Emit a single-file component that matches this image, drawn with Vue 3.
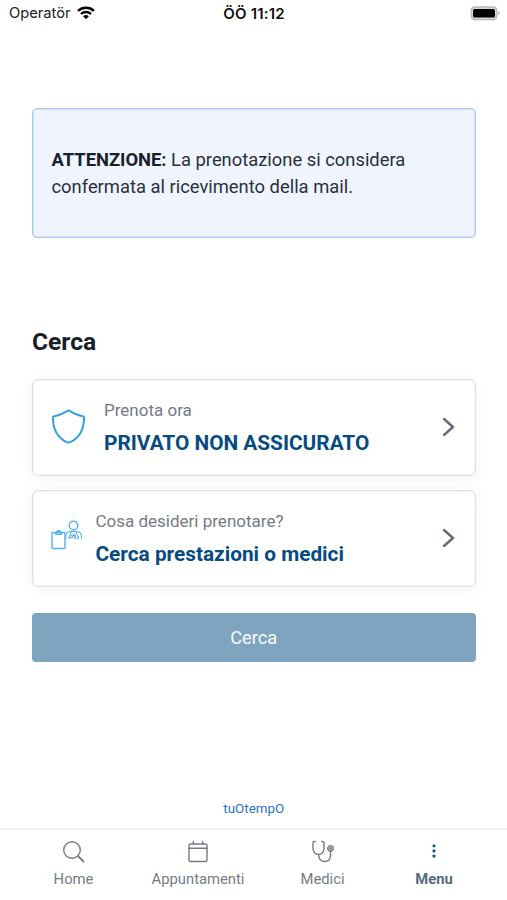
<script setup>
const cards = [
  { id: 'cover', icon: 'shield', label: 'Prenota ora', value: 'PRIVATO NON ASSICURATO' },
  { id: 'service', icon: 'doctor', label: 'Cosa desideri prenotare?', value: 'Cerca prestazioni o medici' },
]
const tabs = [
  { id: 'home', label: 'Home' },
  { id: 'calendar', label: 'Appuntamenti' },
  { id: 'doctors', label: 'Medici' },
  { id: 'menu', label: 'Menu', active: true },
]
</script>

<template>
  <div class="screen">
    <header class="status">
      <div class="carrier">
        <span>Operatör</span>
        <svg width="18" height="14" viewBox="0 0 18 14" fill="none" stroke="#050505">
          <path d="M1 4.900C5.500.7 12.500.7 17 4.900" stroke-width="2.500" />
          <path d="M3.900 8C6.800 5.300 11.200 5.300 14.100 8" stroke-width="2.300" />
          <path d="M6.100 10.300Q9 7.800 11.900 10.300L9 13.300Z" fill="#050505" stroke="none" />
        </svg>
      </div>
      <div class="clock">ÖÖ 11:12</div>
      <svg class="battery" width="32" height="15" viewBox="0 0 32 15">
        <rect x="1.200" y="1" width="25.600" height="12.600" rx="3.600" fill="#d8d8d8" stroke="#b8b8b8" stroke-width="1.300" />
        <rect x="3" y="3" width="22" height="8.600" rx="1.600" fill="#000" />
        <path d="M28.300 5.300Q31.100 7.300 28.300 9.300Z" fill="#aaa" />
      </svg>
    </header>

    <main class="content">
      <section class="notice"><p><strong>ATTENZIONE:</strong> La prenotazione si considera confermata al ricevimento della mail.</p></section>
      <h1>Cerca</h1>
      <div class="cards">
        <article v-for="card in cards" :key="card.id" class="card" :class="card.icon">
          <svg v-if="card.icon === 'shield'" class="card-icon" width="33" height="35" viewBox="0 0 34 36" fill="none" stroke="#2f9fe4" stroke-width="2" stroke-linejoin="round">
            <path d="M17 1.200C12.600 4.200 7.200 6.600 1.700 7.600Q.9 7.800 1 9C1 20.300 5.800 29.300 14.500 33.900Q17 35.200 19.500 33.900C28.200 29.300 33 20.300 33 9Q33.100 7.800 32.300 7.600C26.800 6.600 21.400 4.200 17 1.200Z" />
          </svg>
          <svg v-else class="card-icon" width="32" height="30" viewBox="0 0 32 30" fill="none" stroke="#55b2ed" stroke-width="1.400" stroke-linejoin="round">
            <rect x="1" y="12.500" width="13" height="16" rx="1" />
            <path d="M4.700 12.700V14.300H10.500V12.700M5.200 12.300Q7.500 8.500 9.900 12.300Z" />
            <circle cx="22.500" cy="5.500" r="4.300" />
            <path d="M14.800 19V16Q15 12 19.300 11.500H25.700Q30.200 12 30.500 16V19M18.200 19V16.300M27.300 19V16.300M19.700 11.500V15M25.300 11.500V14.300M22.500 14L20.800 18.500M22.500 14L25.300 18.800" stroke-width="1.100" />
            <circle cx="19.700" cy="16.500" r="1.400" stroke-width="1" /><path d="M23.700 18.700V16Q25.300 13.200 27 16V18.700" stroke-width="1" />
          </svg>
          <div class="card-copy">
            <div class="label">{{ card.label }}</div>
            <div class="value">{{ card.value }}</div>
          </div>
          <svg class="chevron" width="13" height="20" viewBox="0 0 13 20" fill="none" stroke="#666c75" stroke-width="2.400" stroke-linecap="round" stroke-linejoin="round"><path d="M2 2L11 10L2 18" /></svg>
        </article>
      </div>
      <button class="search" type="button">Cerca</button>
      <div class="brand">tuOtempO</div>
    </main>

    <nav class="tabs">
      <div v-for="tab in tabs" :key="tab.id" class="tab" :class="{ active: tab.active }">
        <svg width="24" height="24" viewBox="0 0 24 24" fill="none" stroke="#747c87" stroke-width="1.400" stroke-linecap="round" stroke-linejoin="round">
          <template v-if="tab.id === 'home'"><circle cx="10" cy="10" r="8.300" /><path d="M16 16L21.500 21.500" stroke-width="1.900" /></template>
          <template v-else-if="tab.id === 'calendar'"><rect x="3" y="4" width="18" height="17.500" rx="1.500" /><path d="M3 8.300H21M7.300 1.500V4M16.700 1.500V4" /></template>
          <template v-else-if="tab.id === 'doctors'"><path d="M4.300 1.500H3.200Q2 1.500 2 3V8Q2.300 14.500 7.500 14.500Q12.700 14.500 13 8V3Q13 1.500 11.800 1.500H10.700M7.500 14.500Q8 21.500 13.500 21.500Q19.500 21.500 19.500 15.500V11" /><circle cx="19.500" cy="8.300" r="2.700" /><circle cx="19.500" cy="8.300" r=".8" /></template>
          <g v-else fill="#175689" stroke="none"><rect x="10.600" y="4.500" width="2.800" height="2.800" rx=".6" /><rect x="10.600" y="9.600" width="2.800" height="2.800" rx=".6" /><rect x="10.600" y="14.700" width="2.800" height="2.800" rx=".6" /></g>
        </svg>
        <span>{{ tab.label }}</span>
      </div>
    </nav>
  </div>
</template>

<style>
body { margin: 0; background: #fff; }
</style>

<style scoped>
.screen { box-sizing: border-box; width: 507px; height: 900px; display: flex; flex-direction: column; overflow: hidden; background: #fff; font-family: Roboto, sans-serif; color: #29313c; }
.status { height: 28px; flex: none; display: grid; grid-template-columns: 1fr auto 1fr; align-items: center; box-sizing: border-box; padding: 0 5px 1px 9px; font-family: Inter, sans-serif; font-size: 14.700px; color: #202020; }
.carrier { display: flex; align-items: center; gap: 6px; margin-top: -1px; }
.clock { font-weight: 600; font-size: 15px; color: #111; margin-left: -3px; letter-spacing: .2px; }
.battery { justify-self: end; margin-top: -1px; }
.content { flex: 1; padding: 80px 31.500px 0 32px; display: flex; flex-direction: column; }
.notice { box-sizing: border-box; height: 130px; border: 1.500px solid #a9c9ee; box-shadow: inset 0 0 0 .5px #b9d2ef; border-radius: 5px; background: #eff4fe; padding: 37px 40px 0 18.500px; font-size: 18.380px; line-height: 27px; }
.notice p { margin: 0; }
.notice strong { color: #18212b; }
h1 { margin: 88px 0 0; font-size: 24.600px; line-height: 32px; font-weight: 700; color: #171d29; }
.cards { display: flex; flex-direction: column; gap: 14px; margin-top: 21px; }
.card { box-sizing: border-box; height: 97px; border: 1.500px solid #dfe0e2; border-radius: 6px; display: flex; align-items: center; padding: 0 20px 0 19px; box-shadow: 0 2px 14px rgb(0 0 0 / 5%), inset 0 0 0 .5px #eee; background: #fff; }
.card-icon { flex: none; margin: 0 19px 3px 0; }
.doctor .card-icon { margin: 0 12.500px 8px -1px; }
.card-copy { flex: 1; padding-top: 1px; }
.label { font-size: 17px; line-height: 26px; margin-top: 1px; color: #747b84; }
.value { margin-top: 3px; font-size: 20.800px; line-height: 35px; font-weight: 700; color: #064b82; }
.chevron { margin-bottom: 2px; }
.search { margin: 26px 0 0; border: 0; border-radius: 4px; height: 49px; flex: none; background: #7fa4c0; color: #f4f9fd; font-family: inherit; font-size: 18.300px; padding: 0; }
.brand { margin-top: 137px; text-align: center; font-size: 13.400px; line-height: 20px; color: #2871cd; }
.tabs { height: 72px; flex: none; box-sizing: border-box; border-top: 2px solid #f1f1f2; display: grid; grid-template-columns: 125px 124px 125px 98px; padding: 10px 24px 0 11px; }
.tab { display: flex; flex-direction: column; align-items: center; gap: 5px; font-size: 14.800px; line-height: 20px; color: #747c87; }
.active { font-weight: 700; color: #566b80; }
</style>
